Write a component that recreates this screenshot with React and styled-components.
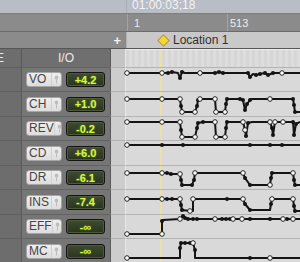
import React from 'react';
import styled, { createGlobalStyle } from 'styled-components';

const GlobalStyle = createGlobalStyle`
  html, body {
    margin: 0;
    padding: 0;
  }
  body {
    background: #767676;
    font-family: "Liberation Sans", Arial, sans-serif;
    overflow: hidden;
  }
`;

const Screen = styled.div`
  width: 300px;
  height: 262px;
  overflow: hidden;
  display: flex;
  flex-direction: column;
`;

const Strip = styled.div`
  display: flex;
  flex: none;
  height: ${p => p.$h}px;
  border-bottom: 1px solid ${p => p.$line};
`;

const StripSide = styled.div`
  width: 126px;
  flex: none;
  box-sizing: border-box;
  display: flex;
  align-items: center;
  justify-content: flex-end;
  padding-right: 5px;
  background: ${p => p.$bg};
  color: #f2f2f2;
  font-size: 13px;
  font-weight: bold;
`;

const StripMain = styled.div`
  flex: 1;
  display: flex;
  align-items: ${p => p.$align || 'center'};
  background: ${p => p.$bg};
  border-left: 1px solid ${p => p.$edge || 'transparent'};
`;

const Counter = styled.span`
  padding-left: 5px;
  font-size: 12px;
  line-height: 11px;
  color: #f4f4f6;
`;

const RulerMark = styled.div`
  width: ${p => (p.$w ? `${p.$w}px` : 'auto')};
  flex: ${p => (p.$w ? 'none' : 1)};
  align-self: stretch;
  box-sizing: border-box;
  display: flex;
  align-items: center;
  padding-left: ${p => p.$pad}px;
  border-left: 1px solid #a3a3a3;
  color: #ededed;
  font-size: 11px;
`;

const Marker = styled.span`
  width: 7px;
  height: 7px;
  margin-left: 32px;
  margin-right: 5px;
  transform: rotate(45deg);
  background: #f3d53c;
  border: 1px solid #b8961a;
  flex: none;
`;

const MarkerLabel = styled.span`
  font-size: 12px;
  color: #2f2f2f;
`;

const Row = styled.div`
  display: flex;
  flex: none;
  height: ${p => p.$h}px;
`;

const EdgeCell = styled.div`
  width: 22px;
  flex: none;
  box-sizing: border-box;
  background: #6d6d6d;
  border-right: 1px solid #585858;
  border-bottom: 1px solid #5f5f5f;
  overflow: hidden;
  display: flex;
  align-items: center;
  color: #e8e8e8;
  font-size: 12px;
`;

const CutText = styled.span`
  margin-left: -4px;
`;

const IOCell = styled.div`
  width: 88px;
  flex: none;
  box-sizing: border-box;
  background: ${p => (p.$head ? '#6f6f6f' : '#767676')};
  border-bottom: 1px solid #626262;
  display: flex;
  align-items: center;
  justify-content: ${p => (p.$head ? 'center' : 'flex-start')};
  padding-left: ${p => (p.$head ? 0 : 4)}px;
  gap: 4px;
  color: #ececec;
  font-size: 12px;
`;

const GapCell = styled.div`
  width: 16px;
  flex: none;
  box-sizing: border-box;
  background: ${p => (p.$head ? '#c5c5c5' : '#cdcdcd')};
  border-left: 1px solid #5a5a5a;
  border-right: 1px solid #e8e8e8;
  border-bottom: 1px solid #b2b2b2;
`;

const Lane = styled.div`
  flex: 1;
  box-sizing: border-box;
  border-bottom: 1px solid #b3b3b3;
  background:
    linear-gradient(90deg, transparent 34px, #eddfa6 34px, #eddfa6 36px, transparent 36px),
    ${p => (p.$head
      ? 'repeating-linear-gradient(90deg, #d6d6d6 0 3px, #dddddd 3px 6px)'
      : '#d9d9d9')};
  border-top: ${p => (p.$head ? '1px solid #ededed' : 'none')};

  svg {
    display: block;
    overflow: visible;
  }
`;

const NameButton = styled.div`
  width: 36px;
  height: 15px;
  box-sizing: border-box;
  display: flex;
  border: 1px solid #a6a6a6;
  border-radius: 3px;
  background: linear-gradient(#eeeeee, #dddddd);
  overflow: hidden;
`;

const NameLabel = styled.span`
  flex: 1;
  padding-left: 2px;
  font-size: 12px;
  line-height: 13px;
  color: #444444;
`;

const PinBox = styled.span`
  width: 9px;
  flex: none;
  border-left: 1px solid #d0d0d0;
  display: flex;
  align-items: center;
  justify-content: center;
`;

const Readout = styled.div`
  width: 39px;
  height: 15px;
  box-sizing: border-box;
  border: 1px solid #141414;
  border-radius: 3px;
  background: linear-gradient(#3f4b30, #2a331f);
  box-shadow: inset 0 0 0 1px #4d5b3b;
  display: flex;
  align-items: center;
  justify-content: center;
  font-size: 11px;
  font-weight: bold;
  color: #d4f83e;
  text-shadow: 0 0 2px rgba(200, 255, 60, 0.45);
`;

const rows = [
  {
    name: 'VO', value: '+4.2', h: 24,
    points: [
      [127, 73, 'w'], [162, 73, 'w'], [168, 73, 'b'], [172, 72, 'b'], [178, 73, ''],
      [180, 78, 'b'], [182, 72, 'b'], [185, 73, ''], [200, 73, 'w'], [215, 73, 'b'],
      [219, 72, 'b'], [223, 73, 'b'], [227, 73, ''], [248, 73, 'b'], [250, 77, 'b'],
      [253, 74, ''], [256, 75, 'b'], [260, 74, 'b'], [265, 73, 'b'], [268, 75, 'b'],
      [273, 73, 'b'], [282, 73, 'w'], [300, 73, ''],
    ],
  },
  {
    name: 'CH', value: '+1.0', h: 25,
    points: [
      [127, 99, 'w'], [162, 99, 'w'], [180, 99, 'w'], [181, 106, 'b'], [182, 112, 'w'],
      [195, 112, 'w'], [197, 106, 'b'], [198, 100, 'b'], [200, 99, 'w'], [215, 99, 'w'],
      [216, 112, 'w'], [225, 112, 'w'], [226, 104, 'b'], [227, 99, 'b'], [240, 99, 'b'],
      [243, 100, 'b'], [245, 110, 'b'], [247, 104, 'b'], [250, 100, 'b'], [252, 99, ''],
      [270, 99, 'w'], [293, 99, 'b'], [294, 105, 'b'], [295, 112, 'b'], [300, 112, ''],
    ],
  },
  {
    name: 'REV', value: '-0.2', h: 24,
    points: [
      [127, 122, 'w'], [162, 122, 'w'], [180, 122, 'w'], [181, 130, 'b'], [182, 137, 'w'],
      [195, 137, 'w'], [197, 128, 'b'], [198, 123, 'b'], [203, 122, 'b'], [215, 122, 'w'],
      [216, 137, 'w'], [225, 137, 'w'], [226, 128, 'b'], [227, 122, 'b'], [243, 122, 'w'],
      [245, 130, 'w'], [246, 136, 'b'], [248, 123, 'b'], [252, 122, ''], [270, 122, 'w'],
      [272, 128, 'b'], [273, 135, 'b'], [275, 122, 'w'], [283, 122, 'w'], [293, 122, 'b'],
      [294, 135, 'b'], [296, 124, 'b'], [300, 122, ''],
    ],
  },
  {
    name: 'CD', value: '+6.0', h: 25,
    points: [
      [127, 145, 'w'], [162, 145, 'b'], [183, 145, 'b'], [250, 145, 'b'],
      [270, 145, 'b'], [282, 145, 'b'], [300, 145, ''],
    ],
  },
  {
    name: 'DR', value: '-6.1', h: 24,
    points: [
      [127, 173, 'w'], [162, 173, 'w'], [167, 173, 'b'], [171, 174, 'b'], [180, 174, 'w'],
      [181, 180, 'b'], [182, 185, 'b'], [192, 185, 'b'], [194, 180, 'b'], [195, 173, 'w'],
      [243, 173, 'w'], [245, 178, 'b'], [250, 185, 'b'], [270, 185, 'w'], [271, 178, 'b'],
      [272, 173, 'b'], [293, 173, 'w'], [294, 180, 'b'], [295, 185, 'b'], [300, 185, ''],
    ],
  },
  {
    name: 'INS', value: '-7.4', h: 25,
    points: [
      [127, 199, 'w'], [162, 199, 'w'], [167, 199, 'b'], [172, 199, 'b'], [180, 199, 'w'],
      [181, 205, 'b'], [182, 210, 'b'], [190, 211, 'w'], [193, 211, ''], [193, 199, 'w'],
      [227, 199, 'b'], [243, 199, 'w'], [245, 204, 'b'], [250, 210, 'b'], [270, 210, ''],
      [271, 204, 'b'], [272, 199, 'w'], [293, 199, 'w'], [294, 206, 'b'], [295, 211, 'b'],
      [300, 211, ''],
    ],
  },
  {
    name: 'EFF', value: '-∞', h: 24,
    points: [
      [127, 234, 'w'], [162, 234, 'w'], [162, 221, 'b'], [163, 220, ''], [180, 219, 'w'],
      [183, 216, 'b'], [185, 218, 'b'], [188, 219, 'b'], [193, 219, 'b'], [197, 219, 'b'],
      [215, 219, 'w'], [222, 219, 'b'], [226, 219, 'b'], [230, 219, 'b'], [233, 219, 'w'],
      [242, 219, 'w'], [250, 219, 'b'], [270, 219, 'b'], [283, 219, 'w'], [287, 219, 'b'],
      [293, 219, 'w'], [300, 219, ''],
    ],
  },
  {
    name: 'MC', value: '-∞', h: 25,
    points: [
      [127, 258, 'w'], [180, 258, ''], [180, 248, 'b'], [181, 243, 'b'], [185, 243, 'b'],
      [190, 243, 'b'], [193, 243, 'w'], [195, 250, 'b'], [195, 258, ''], [250, 258, 'b'],
      [270, 258, 'w'], [300, 258, ''],
    ],
  },
];

const Pin = () => (
  <svg width="5" height="9" viewBox="0 0 5 9">
    <rect x="0.8" y="0.5" width="3.4" height="4" rx="1.5" fill="#bdbdbd" />
    <line x1="2.5" y1="4.5" x2="2.5" y2="8.5" stroke="#bdbdbd" strokeWidth="1" />
  </svg>
);

const Automation = ({ top, height, points }) => (
  <svg width="174" height={height - 1} viewBox={`126 ${top} 174 ${height - 1}`}>
    <polyline
      points={points.map(p => `${p[0]},${p[1]}`).join(' ')}
      fill="none"
      stroke="#141414"
      strokeWidth="2"
      strokeLinejoin="round"
    />
    {points.filter(p => p[2] === 'b').map((p, i) => (
      <circle key={`b${i}`} cx={p[0]} cy={p[1]} r="2" fill="#141414" />
    ))}
    {points.filter(p => p[2] === 'w').map((p, i) => (
      <circle key={`w${i}`} cx={p[0]} cy={p[1]} r="2.3" fill="#ffffff" stroke="#222" strokeWidth="1" />
    ))}
  </svg>
);

export default function App() {
  let top = 68;
  return (
    <Screen>
      <GlobalStyle />
      <Strip $h={13} $line="#7b7d82">
        <StripSide $bg="#b9bdc5" />
        <StripMain $bg="#b9bdc5" $edge="#a9adb5" $align="flex-start">
          <Counter>01:00:03;18</Counter>
        </StripMain>
      </Strip>
      <Strip $h={17} $line="#6b6b6b">
        <StripSide $bg="#8b8b8b" />
        <StripMain $bg="#8b8b8b">
          <RulerMark $w={100} $pad={6}>1</RulerMark>
          <RulerMark $pad={2}>513</RulerMark>
        </StripMain>
      </Strip>
      <Strip $h={16} $line="#565656">
        <StripSide $bg="#8b8b8b">+</StripSide>
        <StripMain $bg="#c9c9c9" $edge="#b0b0b0">
          <Marker />
          <MarkerLabel>Location 1</MarkerLabel>
        </StripMain>
      </Strip>
      <Row $h={19}>
        <EdgeCell><CutText>E</CutText></EdgeCell>
        <IOCell $head>I/O</IOCell>
        <GapCell $head />
        <Lane $head />
      </Row>
      {rows.map(r => {
        const rowTop = top;
        top += r.h;
        return (
          <Row key={r.name} $h={r.h}>
            <EdgeCell />
            <IOCell>
              <NameButton>
                <NameLabel>{r.name}</NameLabel>
                <PinBox><Pin /></PinBox>
              </NameButton>
              <Readout>{r.value}</Readout>
            </IOCell>
            <GapCell />
            <Lane>
              <Automation top={rowTop} height={r.h} points={r.points} />
            </Lane>
          </Row>
        );
      })}
    </Screen>
  );
}
